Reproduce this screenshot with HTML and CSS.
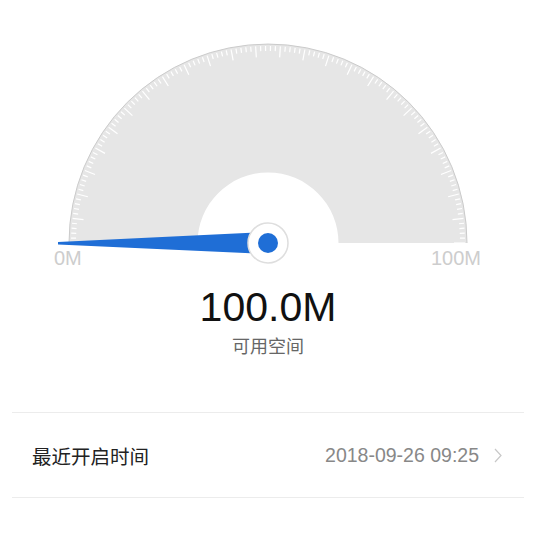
FILE: index.html
```html
<!DOCTYPE html>
<html lang="zh-CN">
<head>
    <meta charset="UTF-8">
    <meta name="viewport" content="width=device-width, initial-scale=1.0">
    <title>存储空间</title>
    <link rel="stylesheet" href="styles.css">
</head>
<body>
    <div class="page">
        <!-- Gauge -->
        <section class="gauge">
            <svg class="dial" width="536" height="283" viewBox="0 0 536 283">
                <path class="dial-face" d="M69 243 A199 199 0 0 1 467 243 L338.5 243 A70.5 70.5 0 0 0 197.5 243 Z"/>
                <path class="dial-rim" d="M69 243 A199 199 0 0 1 467 243"/>
                <g id="ticks" class="dial-ticks"></g>
                <polygon class="needle" points="58,242 58,244.5 268,254 268,232"/>
                <circle class="hub" cx="268" cy="243" r="20"/>
                <circle class="hub-dot" cx="268" cy="243" r="10"/>
                <text class="dial-label" x="54" y="265">0M</text>
                <text class="dial-label" x="481" y="265" text-anchor="end">100M</text>
            </svg>
        </section>

        <div class="usage">
            <div class="usage-value">100.0M</div>
            <div class="usage-label">可用空间</div>
        </div>

        <ul class="info-list">
            <li class="info-row">
                <span class="info-title">最近开启时间</span>
                <span class="info-value">
                    2018-09-26 09:25
                    <svg class="chevron" width="8" height="15" viewBox="0 0 8 15">
                        <polyline points="1,1 7,7.5 1,14"/>
                    </svg>
                </span>
            </li>
        </ul>
    </div>

    <script>
        // Scale ticks: 125 small steps across the half circle, a long one every 5
        const ticks = document.getElementById('ticks');
        const cx = 268, cy = 243, outer = 197;
        let lines = '';
        for (let i = 0; i <= 125; i++) {
            const a = Math.PI - (Math.PI * i / 125);
            const len = i % 5 === 0 ? 11 : 5;
            const x1 = cx + Math.cos(a) * outer;
            const y1 = cy - Math.sin(a) * outer;
            const x2 = cx + Math.cos(a) * (outer - len);
            const y2 = cy - Math.sin(a) * (outer - len);
            lines += `<line x1="${x1.toFixed(2)}" y1="${y1.toFixed(2)}" x2="${x2.toFixed(2)}" y2="${y2.toFixed(2)}"/>`;
        }
        ticks.innerHTML = lines;
    </script>
</body>
</html>
```

FILE: styles.css
```css
body {
    margin: 0;
    padding: 0;
    background-color: #fff;
    font-family: "Liberation Sans", "Noto Sans CJK SC", sans-serif;
    color: #222;
}
.page {
    width: 536px;
}
.dial {
    display: block;
}
.dial-face {
    fill: #e6e6e6;
}
.dial-rim {
    fill: none;
    stroke: #cbcbcb;
    stroke-width: 1;
}
.dial-ticks line {
    stroke: #fff;
    stroke-width: 1.2;
}
.needle {
    fill: #1f6ed6;
}
.hub {
    fill: #fff;
    stroke: #dedede;
    stroke-width: 1.5;
}
.hub-dot {
    fill: #1f6ed6;
}
.dial-label {
    font-family: "Liberation Sans", sans-serif;
    font-size: 20px;
    fill: #cdcdcd;
}
.usage {
    text-align: center;
}
.usage-value {
    font-size: 41px;
    line-height: 48px;
    color: #111;
}
.usage-label {
    margin-top: 4px;
    font-size: 18px;
    line-height: 24px;
    color: #666;
}
.info-list {
    list-style: none;
    margin: 53px 12px 0;
    padding: 0;
}
.info-row {
    display: flex;
    align-items: center;
    justify-content: space-between;
    height: 84px;
    padding: 0 22px 0 20px;
    border-top: 1px solid #ececec;
    border-bottom: 1px solid #ececec;
}
.info-title {
    font-size: 19.5px;
    color: #222;
}
.info-value {
    display: flex;
    align-items: center;
    gap: 15px;
    font-size: 19.5px;
    color: #888;
}
.chevron polyline {
    fill: none;
    stroke: #c8c8c8;
    stroke-width: 1.2;
}
```
